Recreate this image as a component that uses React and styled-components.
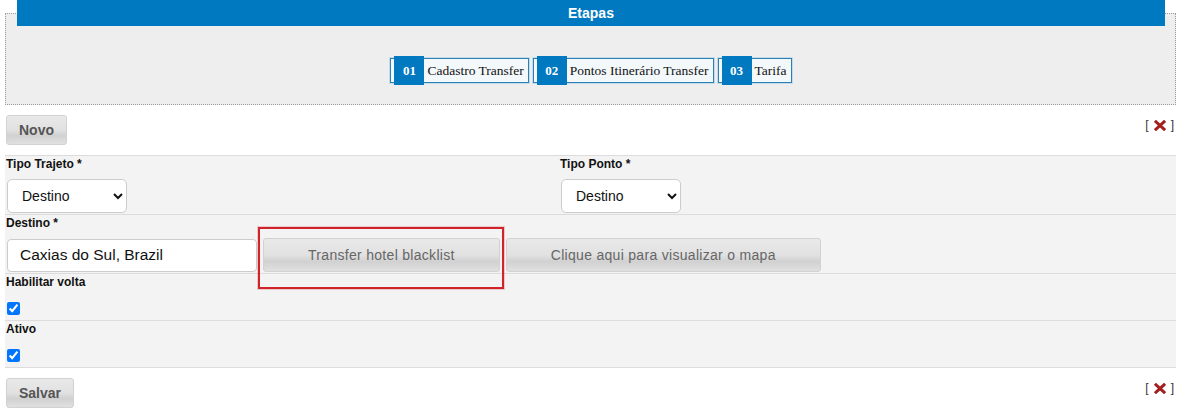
import React from "react";
import styled, { createGlobalStyle } from "styled-components";

const GlobalStyle = createGlobalStyle`
  body {
    margin: 0;
    background: #ffffff;
    font-family: "Liberation Sans", Arial, sans-serif;
    color: #111111;
  }
`;

const steps = [
  { number: "01", label: "Cadastro Transfer" },
  { number: "02", label: "Pontos Itinerário Transfer" },
  { number: "03", label: "Tarifa" }
];

const Page = styled.div`
  width: 1171px;
  margin-left: 5px;
`;

const StepsBox = styled.fieldset`
  margin: 0;
  padding: 0 10px 0 11px;
  border: 1px dotted #9a9a9a;
  background: #eeeeee;
`;

const StepsTitle = styled.legend`
  width: 100%;
  height: 26px;
  padding: 0;
  background: #0079c1;
  color: #ffffff;
  font: bold 14px/26px "Liberation Sans", Arial, sans-serif;
  text-align: center;
`;

const StepList = styled.div`
  display: flex;
  justify-content: center;
  gap: 4px;
  height: 25px;
  margin: 32px 0 21px;
`;

const Step = styled.div`
  display: flex;
  align-items: center;
  box-sizing: border-box;
  height: 25px;
  padding: 0 4px 0 3px;
  border: 1px solid #2f7fb5;
  box-shadow: 0 0 0 1px #c4dbea;
  background: #f3f8fb;
`;

const StepNumber = styled.span`
  display: flex;
  align-items: center;
  justify-content: center;
  flex: none;
  width: 30px;
  height: 29px;
  background: #0079c1;
  color: #ffffff;
  font: bold 13px "Liberation Serif", Georgia, serif;
`;

const StepLabel = styled.span`
  padding-left: 3px;
  white-space: nowrap;
  color: #111111;
  font: 13.5px "Liberation Serif", Georgia, serif;
`;

const ActionBar = styled.div`
  display: flex;
  justify-content: space-between;
  align-items: flex-start;
  padding: 10px 2px 10px 1px;
`;

const GlossButton = styled.button`
  height: 30px;
  padding: 0 12px;
  border: 1px solid #d2d2d2;
  border-radius: 3px;
  background: linear-gradient(
    #e9e9e9 0%,
    #e1e1e1 50%,
    #d1d1d1 70%,
    #d9d9d9 86%,
    #e0e0e0 100%
  );
  color: #555555;
  font: bold 14px "Liberation Sans", Arial, sans-serif;
  cursor: pointer;
`;

const FieldButton = styled(GlossButton)`
  height: 34px;
  padding: 0 44px;
  color: #666666;
  font-weight: normal;
  letter-spacing: 0.3px;
`;

const CloseLink = styled.a`
  display: flex;
  align-items: center;
  gap: 5px;
  margin-top: 2px;
  line-height: 16px;
  font-size: 12px;
  color: #333333;
  cursor: pointer;
`;

const Rows = styled.div`
  border-bottom: 1px solid #dcdcdc;
`;

const FormRow = styled.div`
  display: flow-root;
  padding: 1px 0 0 1px;
  border-top: 1px solid #dcdcdc;
  background: #f3f3f3;
`;

const FieldGrid = styled.div`
  display: grid;
  grid-template-columns: 554px 1fr;
`;

const FieldLabel = styled.label`
  display: block;
  font: bold 12px/15px "Liberation Sans", Arial, sans-serif;
  color: #111111;
`;

const Select = styled.select`
  display: block;
  box-sizing: border-box;
  width: 120px;
  height: 34px;
  margin: 7px 0 1px 1px;
  padding: 0 6px 0 10px;
  border: 1px solid #cccccc;
  border-radius: 5px;
  background: #ffffff;
  color: #111111;
  font: 14px "Liberation Sans", Arial, sans-serif;
`;

const Controls = styled.div`
  display: flex;
  align-items: center;
  gap: 6px;
  height: 34px;
  margin: 7px 0 1px 1px;
`;

const TextInput = styled.input`
  box-sizing: border-box;
  width: 250px;
  height: 33px;
  padding: 0 12px;
  border: 1px solid #cccccc;
  border-radius: 4px;
  background: #ffffff;
  color: #111111;
  font: 15.5px "Liberation Sans", Arial, sans-serif;
`;

const Highlighted = styled.span`
  position: relative;
  display: inline-flex;

  &::after {
    content: "";
    position: absolute;
    inset: -11px -4px -17px -5px;
    border: 2px solid #d0242d;
    box-shadow: 0 0 0 1px rgba(220, 70, 70, 0.25);
    pointer-events: none;
  }
`;

const Checkbox = styled.input`
  display: block;
  width: 13px;
  height: 13px;
  margin: 12px 0 5px 1px;
`;

const CloseIcon = () => (
  <svg width="12" height="11" viewBox="0 0 12 11">
    <path
      d="M2 1.8 L10 9.2 M10 1.8 L2 9.2"
      stroke="#a31f1f"
      strokeWidth="3"
      strokeLinecap="square"
    />
  </svg>
);

const Close = () => (
  <CloseLink>
    <span>[</span>
    <CloseIcon />
    <span>]</span>
  </CloseLink>
);

export default function App() {
  return (
    <>
      <GlobalStyle />
      <Page>
        <StepsBox>
          <StepsTitle>Etapas</StepsTitle>
          <StepList>
            {steps.map(step => (
              <Step key={step.number}>
                <StepNumber>{step.number}</StepNumber>
                <StepLabel>{step.label}</StepLabel>
              </Step>
            ))}
          </StepList>
        </StepsBox>

        <ActionBar>
          <GlossButton>Novo</GlossButton>
          <Close />
        </ActionBar>

        <Rows>
          <FormRow>
            <FieldGrid>
              <div>
                <FieldLabel>Tipo Trajeto *</FieldLabel>
                <Select defaultValue="destino">
                  <option value="destino">Destino</option>
                  <option value="origem">Origem</option>
                </Select>
              </div>
              <div>
                <FieldLabel>Tipo Ponto *</FieldLabel>
                <Select defaultValue="destino">
                  <option value="destino">Destino</option>
                  <option value="origem">Origem</option>
                </Select>
              </div>
            </FieldGrid>
          </FormRow>

          <FormRow>
            <FieldLabel>Destino *</FieldLabel>
            <Controls>
              <TextInput defaultValue="Caxias do Sul, Brazil" />
              <Highlighted>
                <FieldButton>Transfer hotel blacklist</FieldButton>
              </Highlighted>
              <FieldButton>Clique aqui para visualizar o mapa</FieldButton>
            </Controls>
          </FormRow>

          <FormRow>
            <FieldLabel>Habilitar volta</FieldLabel>
            <Checkbox type="checkbox" defaultChecked />
          </FormRow>

          <FormRow>
            <FieldLabel>Ativo</FieldLabel>
            <Checkbox type="checkbox" defaultChecked />
          </FormRow>
        </Rows>

        <ActionBar>
          <GlossButton>Salvar</GlossButton>
          <Close />
        </ActionBar>
      </Page>
    </>
  );
}
